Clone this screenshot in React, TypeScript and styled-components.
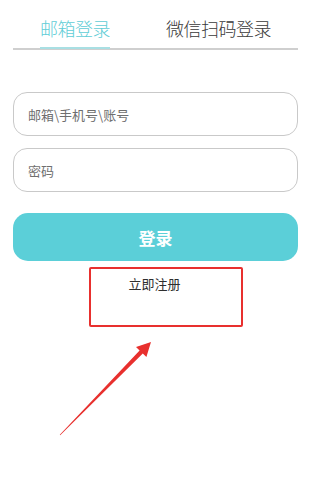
import React from "react";
import styled, { createGlobalStyle } from "styled-components";

const Global = createGlobalStyle`
  html, body { margin: 0; padding: 0; background: #fff; }
  body { font-family: "Noto Sans CJK SC", "Noto Sans", sans-serif; }
  * { box-sizing: border-box; }
`;

const Page = styled.div`
  position: relative;
  width: 311px;
  height: 498px;
  padding: 0 13px;
  overflow: hidden;
`;

const TabBar = styled.div`
  display: flex;
  justify-content: center;
  gap: 56px;
  border-bottom: 2px solid #cfcfcf;
`;

const Tab = styled.div<{ $active?: boolean }>`
  padding-top: 16px;
  padding-bottom: 7px;
  font-size: 18px;
  line-height: 24px;
  font-weight: 300;
  color: ${(p) => (p.$active ? "#5fcdd6" : "#3a3a3a")};
  border-bottom: 2px solid ${(p) => (p.$active ? "#a9dfe3" : "transparent")};
  margin-bottom: -1px;
  letter-spacing: -0.5px;
`;

const Form = styled.div`
  display: flex;
  flex-direction: column;
  gap: 12px;
  margin-top: 42px;
`;

const Field = styled.input`
  height: 44px;
  width: 100%;
  border: 1px solid #c9c9c9;
  border-radius: 14px;
  padding: 0 14px;
  font-family: "Noto Sans CJK SC", sans-serif;
  font-size: 13px;
  outline: none;
  background: #fff;
  &::placeholder { color: #6f6f6f; }
`;

const LoginButton = styled.button`
  margin-top: 21px;
  width: 100%;
  height: 48px;
  border: none;
  border-radius: 15px;
  background: #5bcfd8;
  color: #fff;
  font-family: "Noto Sans CJK SC", sans-serif;
  font-size: 17px;
  font-weight: 700;
  cursor: pointer;
`;

const RegisterLink = styled.div`
  margin-top: 13px;
  padding-right: 2px;
  text-align: center;
  font-size: 13px;
  line-height: 20px;
  color: #2e2e2e;
`;

const Highlight = styled.div`
  position: absolute;
  left: 89px;
  top: 267px;
  width: 154px;
  height: 60px;
  border: 2px solid #e8302e;
  border-radius: 2px;
  pointer-events: none;
`;

const ArrowSvg = styled.svg`
  position: absolute;
  left: 0;
  top: 0;
  pointer-events: none;
`;

export default function App() {
  return (
    <>
      <Global />
      <Page>
        <TabBar>
          <Tab $active>邮箱登录</Tab>
          <Tab>微信扫码登录</Tab>
        </TabBar>
        <Form>
          <Field placeholder="邮箱\手机号\账号" />
          <Field type="password" placeholder="密码" />
        </Form>
        <LoginButton>登录</LoginButton>
        <RegisterLink>立即注册</RegisterLink>
        <Highlight />
        <ArrowSvg width="311" height="498" viewBox="0 0 311 498">
          <polygon
            points="59.8,434.8 139.6,350.4 136,346.9 151,342 146.4,357.1 142.8,353.6 60.2,435.2"
            fill="#e8302e"
          />
        </ArrowSvg>
      </Page>
    </>
  );
}
